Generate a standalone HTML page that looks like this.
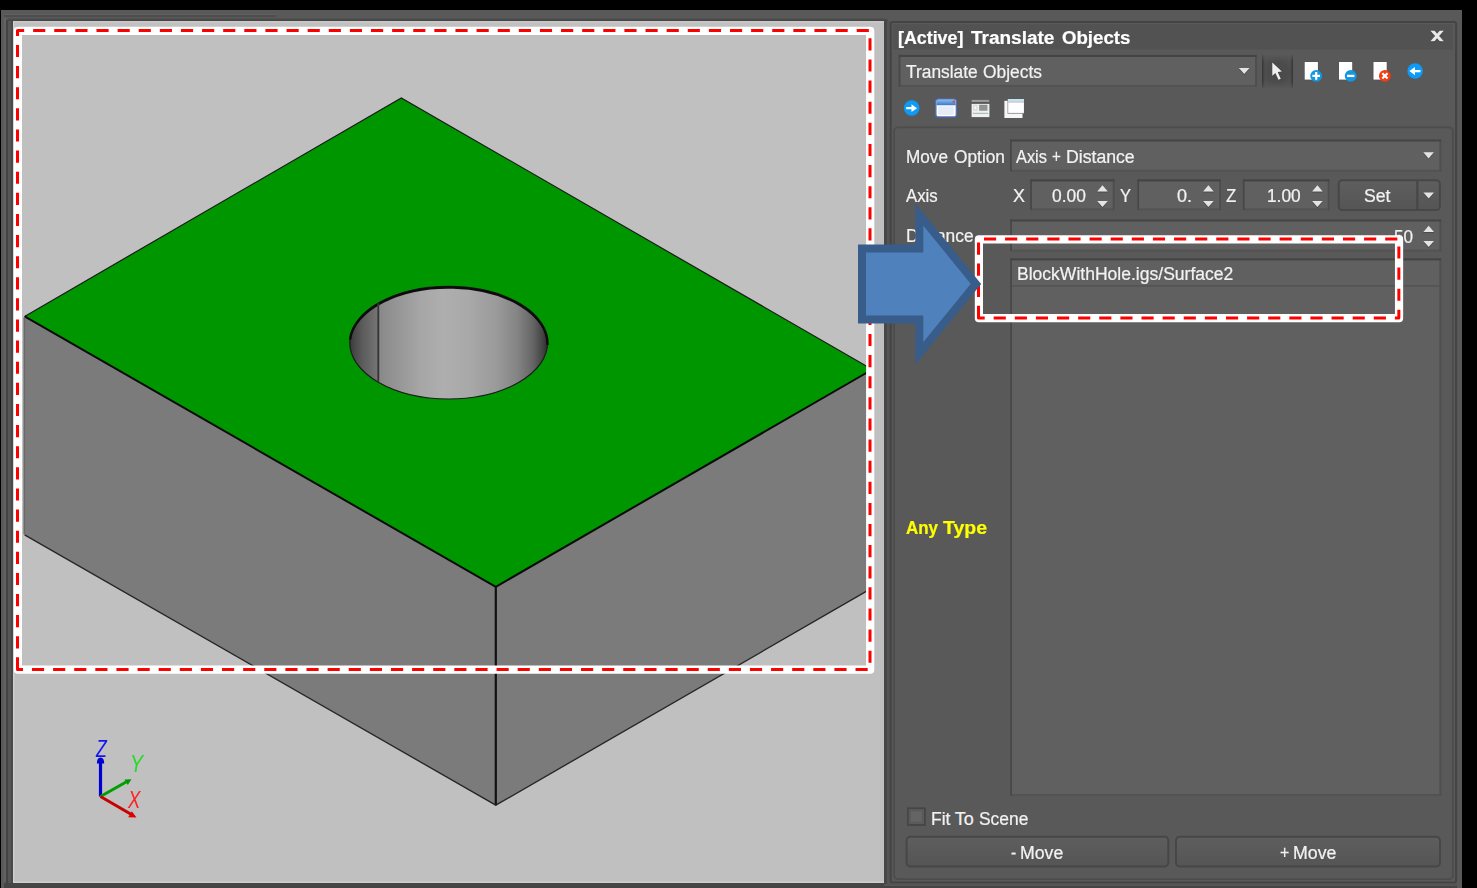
<!DOCTYPE html>
<html><head><meta charset="utf-8"><title>Translate Objects</title>
<style>
html,body{margin:0;padding:0;background:#000;}
body{width:1477px;height:888px;position:relative;overflow:hidden;font-family:"Liberation Sans",sans-serif;}
.b{position:absolute;box-sizing:border-box;}
.t{position:absolute;white-space:pre;line-height:1em;transform-origin:0 0;-webkit-text-stroke:0.22px currentColor;}
svg{position:absolute;left:0;top:0;overflow:visible;}
</style></head><body>

<div class="b" style="left:1px;top:10px;width:1461px;height:878px;background:#595959;"></div>
<div class="b" style="left:1px;top:10px;width:3px;height:878px;background:#5a5a5a;"></div>
<div class="b" style="left:4px;top:17px;width:1.6px;height:865px;background:#626262;"></div>
<div class="b" style="left:5.8px;top:20px;width:2.2px;height:864px;background:#434343;"></div>
<div class="b" style="left:8px;top:18px;width:2.6px;height:870px;background:#555555;"></div>
<div class="b" style="left:10.6px;top:18px;width:2.4px;height:870px;background:#494949;"></div>
<div class="b" style="left:4px;top:15.2px;width:272px;height:1.6px;background:#4d4d4d;"></div>
<div class="b" style="left:4px;top:13.8px;width:272px;height:1.4px;background:#5f5f5f;"></div>
<div class="b" style="left:8px;top:17.6px;width:880px;height:3.4px;background:linear-gradient(#565656,#474747 70%,#454545);border-top-right-radius:3px;"></div>
<div class="b" style="left:4px;top:883px;width:887px;height:5px;background:#464646;"></div>
<div class="b" style="left:884.4px;top:19.5px;width:2.6px;height:866.5px;background:#474747;"></div>
<div class="b" style="left:887px;top:21px;width:2.8px;height:865px;background:#545454;"></div>
<div class="b" style="left:13px;top:20.5px;width:871.4px;height:862.7px;background:#c0c0c0;box-shadow:inset 1.4px -1.4px 0 0 #cecece, inset 0 1.5px 0 0 #c9c9c9;"></div>
<svg width="1477" height="888" viewBox="0 0 1477 888">
<defs>
<clipPath id="vp"><rect x="13" y="20.5" width="871.4" height="862.7"/></clipPath>
<linearGradient id="hole" gradientUnits="userSpaceOnUse" x1="348.7" y1="0" x2="548.6" y2="0">
<stop offset="0" stop-color="#343434"/>
<stop offset="0.025" stop-color="#464646"/>
<stop offset="0.07" stop-color="#5c5c5c"/>
<stop offset="0.148" stop-color="#767676"/>
<stop offset="0.149" stop-color="#888888"/>
<stop offset="0.26" stop-color="#989898"/>
<stop offset="0.36" stop-color="#a6a6a6"/>
<stop offset="0.47" stop-color="#aeaeae"/>
<stop offset="0.60" stop-color="#a9a9a9"/>
<stop offset="0.74" stop-color="#9a9a9a"/>
<stop offset="0.84" stop-color="#858585"/>
<stop offset="0.92" stop-color="#666666"/>
<stop offset="0.97" stop-color="#444444"/>
<stop offset="1" stop-color="#262626"/>
</linearGradient>
</defs>
<g clip-path="url(#vp)">
<polygon points="24.6,316.4 495.8,586.8 495.8,805.2 24.6,534.8" fill="#7b7b7b"/>
<polygon points="495.8,586.8 872.3,369.5 872.3,587.9 495.8,805.2" fill="#7b7b7b"/>
<polygon points="401.3,97.9 872.3,369.5 495.8,586.8 24.6,316.4" fill="#009600"/>
<polyline points="24.6,316.4 401.3,97.9 872.3,369.5" fill="none" stroke="#1a1a1a" stroke-width="1.2"/>
<polyline points="24.6,316.4 495.8,586.8 872.3,369.5" fill="none" stroke="#0a0a0a" stroke-width="2"/>
<line x1="495.8" y1="586.8" x2="495.8" y2="805.1999999999999" stroke="#111" stroke-width="2.2"/>
<polyline points="24.6,534.8 495.8,805.2 872.3,587.9" fill="none" stroke="#262626" stroke-width="1.35"/>
<line x1="24.3" y1="317.4" x2="24.3" y2="534.3" stroke="#6a6a6a" stroke-width="1.7"/>
<ellipse cx="448.65" cy="342.7" rx="98.9" ry="56.3" fill="url(#hole)" stroke="#1c1c1c" stroke-width="1.2"/>
<path d="M350.0,339.6 A98.9,56.3 0 0 1 547.5,344.9" fill="none" stroke="#0c0c0c" stroke-width="2.5"/>
<line x1="378.3" y1="303.2" x2="378.3" y2="382.2" stroke="#363636" stroke-width="1.9"/>
<line x1="100.5" y1="796.5" x2="100.5" y2="761" stroke="#0000d2" stroke-width="3.2"/>
<path d="M96.9,763.5 Q96.9,757.5 100.5,757.5 Q104.2,757.5 104.2,763.5 Z" fill="#0000d2"/>
<line x1="100.5" y1="796.5" x2="127" y2="781.5" stroke="#00a000" stroke-width="3"/>
<polygon points="131.5,779.2 124.5,779.6 127.8,785" fill="#009800"/>
<line x1="100.5" y1="796.5" x2="131" y2="814.3" stroke="#c80000" stroke-width="3"/>
<polygon points="136.5,817.5 128.2,817.3 131.8,811.2" fill="#e00000"/>
</g>
</svg>
<div class="b" style="left:889.8px;top:21px;width:567.2px;height:862.5px;background:#595959;"></div>
<div class="b" style="left:884.4px;top:883.5px;width:572.6px;height:2.3px;background:#555555;"></div>
<div class="b" style="left:4px;top:885.8px;width:1453px;height:2.2px;background:#444444;"></div>
<svg width="1477" height="888"><rect x="893.2" y="24.3" width="559.7" height="25.2" fill="#525252"/></svg>
<div class="b" style="left:1262.2px;top:54.8px;width:31.0px;height:32.8px;background:linear-gradient(90deg,rgba(50,50,50,.95) 0,rgba(50,50,50,.4) 1.6px,rgba(50,50,50,0) 3px) ,linear-gradient(270deg,rgba(50,50,50,.95) 0,rgba(50,50,50,.4) 1.6px,rgba(50,50,50,0) 3px),radial-gradient(ellipse 62% 58% at 50% 52%,#494949 0,#4c4c4c 55%,#545454 100%);-webkit-mask-image:linear-gradient(180deg,rgba(0,0,0,.25) 0,#000 18%,#000 82%,rgba(0,0,0,.25) 100%);mask-image:linear-gradient(180deg,rgba(0,0,0,.25) 0,#000 18%,#000 82%,rgba(0,0,0,.25) 100%);"></div>
<svg width="1477" height="888" viewBox="0 0 1477 888">
<defs>
<linearGradient id="btn" x1="0" y1="0" x2="0" y2="1"><stop offset="0" stop-color="#5e5e5e"/><stop offset="1" stop-color="#555555"/></linearGradient>
</defs>
<rect x="890.75" y="22.05" width="565.3" height="860.5" rx="1.6" fill="none" stroke="#444444" stroke-width="1.95"/>
<rect x="894.1" y="127.4" width="558.8" height="751.8" rx="4" fill="none" stroke="#4c4c4c" stroke-width="1.8"/>
<rect x="898.6" y="54.9" width="358.4" height="32.1" fill="#606060" /><rect x="898.6" y="84.9" width="358.4" height="2.1" fill="#535353" /><rect x="1255.1" y="54.9" width="1.9" height="31.5" fill="#4e4e4e" /><rect x="898.6" y="54.9" width="1.8" height="31.5" fill="#484848" /><rect x="898.9" y="54.9" width="357.8" height="2.1" fill="#444444" />
<rect x="1010" y="139.4" width="431.3" height="32.4" fill="#606060" /><rect x="1010" y="169.70000000000002" width="431.3" height="2.1" fill="#535353" /><rect x="1439.3999999999999" y="139.4" width="1.9" height="31.8" fill="#4e4e4e" /><rect x="1010" y="139.4" width="1.8" height="31.8" fill="#484848" /><rect x="1010.3" y="139.4" width="430.7" height="2.1" fill="#444444" />
<rect x="1030.1" y="179.3" width="84.6" height="31.2" fill="#606060" /><rect x="1030.1" y="208.4" width="84.6" height="2.1" fill="#535353" /><rect x="1112.8" y="179.3" width="1.9" height="30.6" fill="#4e4e4e" /><rect x="1030.1" y="179.3" width="1.8" height="30.6" fill="#484848" /><rect x="1030.3999999999999" y="179.3" width="84.0" height="2.1" fill="#444444" />
<rect x="1137.3" y="179.3" width="83.7" height="31.2" fill="#606060" /><rect x="1137.3" y="208.4" width="83.7" height="2.1" fill="#535353" /><rect x="1219.1" y="179.3" width="1.9" height="30.6" fill="#4e4e4e" /><rect x="1137.3" y="179.3" width="1.8" height="30.6" fill="#484848" /><rect x="1137.6" y="179.3" width="83.1" height="2.1" fill="#444444" />
<rect x="1242.8" y="179.3" width="86.8" height="31.2" fill="#606060" /><rect x="1242.8" y="208.4" width="86.8" height="2.1" fill="#535353" /><rect x="1327.6999999999998" y="179.3" width="1.9" height="30.6" fill="#4e4e4e" /><rect x="1242.8" y="179.3" width="1.8" height="30.6" fill="#484848" /><rect x="1243.1" y="179.3" width="86.2" height="2.1" fill="#444444" />
<rect x="1010.2" y="219.4" width="431.1" height="32.3" fill="#606060" /><rect x="1010.2" y="249.6" width="431.1" height="2.1" fill="#535353" /><rect x="1439.3999999999999" y="219.4" width="1.9" height="31.7" fill="#4e4e4e" /><rect x="1010.2" y="219.4" width="1.8" height="31.7" fill="#484848" /><rect x="1010.5" y="219.4" width="430.5" height="2.1" fill="#444444" />
<rect x="1010.2" y="258.3" width="431.1" height="537.9" fill="#606060" /><rect x="1010.2" y="794.1" width="431.1" height="2.1" fill="#535353" /><rect x="1439.3999999999999" y="258.3" width="1.9" height="537.3" fill="#4e4e4e" /><rect x="1010.2" y="258.3" width="1.8" height="537.3" fill="#484848" /><rect x="1010.5" y="258.3" width="430.5" height="2.1" fill="#444444" />
<rect x="1012" y="285.2" width="427.4" height="1.5" fill="#535353" />
<rect x="1338.7" y="180.3" width="101.2" height="29.7" rx="3.6" fill="url(#btn)" stroke="#474747" stroke-width="2"/>
<rect x="1416.2" y="180.5" width="2.2" height="29.3" fill="#474747" />
<rect x="906.6" y="836.8" width="261.7" height="29.6" rx="3.6" fill="url(#btn)" stroke="#474747" stroke-width="2"/>
<rect x="1176" y="836.8" width="264" height="29.6" rx="3.6" fill="url(#btn)" stroke="#474747" stroke-width="2"/>
<rect x="907" y="807.4" width="18.7" height="18.4" fill="#454545" />
<rect x="908.7" y="809.1" width="15.3" height="15.0" fill="#5a5a5a" />
<rect x="911" y="811.4" width="10.7" height="10.4" fill="#646464" />
</svg>
<div class="t" style="left:96.07px;top:738px;font-size:23px;color:#1414f0;font-style:italic;-webkit-text-stroke:0;transform:scaleX(0.7687);">Z</div>
<div class="t" style="left:129.69px;top:753px;font-size:23px;color:#22dd22;font-style:italic;-webkit-text-stroke:0;transform:scaleX(0.8533);">Y</div>
<div class="t" style="left:127.71px;top:789px;font-size:23px;color:#ff2222;font-style:italic;-webkit-text-stroke:0;transform:scaleX(0.8056);">X</div>
<div class="t" style="left:898.45px;top:29px;font-size:18.8px;color:#ffffff;font-weight:700;transform:scaleX(0.9493);">[Active]</div>
<div class="t" style="left:971.20px;top:29px;font-size:18.8px;color:#ffffff;font-weight:700;transform:scaleX(1.0107);">Translate</div>
<div class="t" style="left:1061.70px;top:29px;font-size:18.8px;color:#ffffff;font-weight:700;transform:scaleX(0.9921);">Objects</div>
<div class="t" style="left:905.90px;top:63px;font-size:18.0px;color:#f2f2f2;transform:scaleX(0.9643);">Translate</div>
<div class="t" style="left:983.00px;top:63px;font-size:18.0px;color:#f2f2f2;transform:scaleX(0.9652);">Objects</div>
<div class="t" style="left:905.55px;top:148px;font-size:18.0px;color:#f2f2f2;transform:scaleX(0.9534);">Move</div>
<div class="t" style="left:954.20px;top:148px;font-size:18.0px;color:#f2f2f2;transform:scaleX(0.9611);">Option</div>
<div class="t" style="left:1015.60px;top:148px;font-size:18.0px;color:#f2f2f2;transform:scaleX(0.9087);">Axis</div>
<div class="t" style="left:1051.60px;top:148px;font-size:18.0px;color:#f2f2f2;transform:scaleX(0.8400);">+</div>
<div class="t" style="left:1065.82px;top:148px;font-size:18.0px;color:#f2f2f2;transform:scaleX(0.9809);">Distance</div>
<div class="t" style="left:905.60px;top:187px;font-size:18.0px;color:#f2f2f2;transform:scaleX(0.9322);">Axis</div>
<div class="t" style="left:1013.10px;top:187px;font-size:18.0px;color:#f2f2f2;transform:scaleX(0.9917);">X</div>
<div class="t" style="left:1052.40px;top:187px;font-size:18.0px;color:#f2f2f2;transform:scaleX(0.9651);">0.00</div>
<div class="t" style="left:1120.10px;top:187px;font-size:18.0px;color:#f2f2f2;transform:scaleX(0.9167);">Y</div>
<div class="t" style="left:1177.40px;top:187px;font-size:18.0px;color:#f2f2f2;transform:scaleX(0.9992);">0.</div>
<div class="t" style="left:1226.30px;top:187px;font-size:18.0px;color:#f2f2f2;transform:scaleX(0.9364);">Z</div>
<div class="t" style="left:1267.24px;top:187px;font-size:18.0px;color:#f2f2f2;transform:scaleX(0.9611);">1.00</div>
<div class="t" style="left:1363.80px;top:187px;font-size:18.0px;color:#f2f2f2;transform:scaleX(0.9809);">Set</div>
<div class="t" style="left:905.74px;top:227px;font-size:18.0px;color:#f2f2f2;transform:scaleX(0.9649);">Distance</div>
<div class="t" style="left:1393.80px;top:228px;font-size:18.0px;color:#f2f2f2;transform:scaleX(0.9495);">50</div>
<div class="t" style="left:1016.93px;top:265px;font-size:18.0px;color:#f2f2f2;transform:scaleX(0.9739);">BlockWithHole.igs/Surface2</div>
<div class="t" style="left:906.00px;top:519px;font-size:18.8px;color:#ffff00;font-weight:700;transform:scaleX(0.9019);">Any</div>
<div class="t" style="left:943.30px;top:519px;font-size:18.8px;color:#ffff00;font-weight:700;transform:scaleX(1.0358);">Type</div>
<div class="t" style="left:931.33px;top:810px;font-size:18.0px;color:#f2f2f2;transform:scaleX(0.9740);">Fit</div>
<div class="t" style="left:954.80px;top:810px;font-size:18.0px;color:#f2f2f2;transform:scaleX(1.0000);">To</div>
<div class="t" style="left:979.20px;top:810px;font-size:18.0px;color:#f2f2f2;transform:scaleX(0.9681);">Scene</div>
<div class="t" style="left:1010.60px;top:844px;font-size:18.0px;color:#f2f2f2;transform:scaleX(0.8667);">-</div>
<div class="t" style="left:1019.92px;top:844px;font-size:18.0px;color:#f2f2f2;transform:scaleX(0.9836);">Move</div>
<div class="t" style="left:1279.80px;top:844px;font-size:18.0px;color:#f2f2f2;transform:scaleX(0.8800);">+</div>
<div class="t" style="left:1293.11px;top:844px;font-size:18.0px;color:#f2f2f2;transform:scaleX(0.9859);">Move</div>
<svg width="1477" height="888" viewBox="0 0 1477 888">
<polygon points="1430.4,31.7 1434.5,31.7 1443.8,42.2 1439.7,42.2" fill="#3e3e3e"/>
<polygon points="1439.7,31.7 1443.8,31.7 1434.5,42.2 1430.4,42.2" fill="#3e3e3e"/>
<polygon points="1430.4,30.7 1434.5,30.7 1443.8,41.2 1439.7,41.2" fill="#e9e9e9"/>
<polygon points="1439.7,30.7 1443.8,30.7 1434.5,41.2 1430.4,41.2" fill="#e9e9e9"/>
<polygon points="1238.9,68.9 1249.5,68.9 1244.2,75.19999999999999" fill="#4a4a4a"/><polygon points="1238.9,67.9 1249.5,67.9 1244.2,74.1" fill="#e4e4e4"/>
<polygon points="1423.3,153.20000000000002 1433.8999999999999,153.20000000000002 1428.6,159.5" fill="#4a4a4a"/><polygon points="1423.3,152.20000000000002 1433.8999999999999,152.20000000000002 1428.6,158.4" fill="#e4e4e4"/>
<polygon points="1423.4,193.4 1434.0,193.4 1428.7,199.7" fill="#4a4a4a"/><polygon points="1423.4,192.4 1434.0,192.4 1428.7,198.6" fill="#e4e4e4"/>
<rect x="1097.2" y="191.4" width="10.6" height="1.2" fill="#4c4c4c"/><polygon points="1097.2,191.4 1107.8,191.4 1102.5,185.20000000000002" fill="#e4e4e4"/>
<polygon points="1097.2,201.9 1107.8,201.9 1102.5,208.2" fill="#4a4a4a"/><polygon points="1097.2,200.9 1107.8,200.9 1102.5,207.1" fill="#e4e4e4"/>
<rect x="1203.1000000000001" y="191.4" width="10.6" height="1.2" fill="#4c4c4c"/><polygon points="1203.1000000000001,191.4 1213.7,191.4 1208.4,185.20000000000002" fill="#e4e4e4"/>
<polygon points="1203.1000000000001,201.9 1213.7,201.9 1208.4,208.2" fill="#4a4a4a"/><polygon points="1203.1000000000001,200.9 1213.7,200.9 1208.4,207.1" fill="#e4e4e4"/>
<rect x="1312.1000000000001" y="191.4" width="10.6" height="1.2" fill="#4c4c4c"/><polygon points="1312.1000000000001,191.4 1322.7,191.4 1317.4,185.20000000000002" fill="#e4e4e4"/>
<polygon points="1312.1000000000001,201.9 1322.7,201.9 1317.4,208.2" fill="#4a4a4a"/><polygon points="1312.1000000000001,200.9 1322.7,200.9 1317.4,207.1" fill="#e4e4e4"/>
<rect x="1423.4" y="231.9" width="10.6" height="1.2" fill="#4c4c4c"/><polygon points="1423.4,231.9 1434.0,231.9 1428.7,225.70000000000002" fill="#e4e4e4"/>
<polygon points="1423.4,241.9 1434.0,241.9 1428.7,248.2" fill="#4a4a4a"/><polygon points="1423.4,240.9 1434.0,240.9 1428.7,247.1" fill="#e4e4e4"/>
<path d="M1272.3,62.4 L1272.3,75.8 L1275.4,72.9 L1278.5,79.8 L1280.7,78.8 L1277.7,72.1 L1281.8,71.4 Z" fill="#f0f0f0"/>
<rect x="1304.1000000000001" y="61.4" width="14.4" height="18.8" fill="#4f4f4f" opacity="0.5"/><rect x="1304.7" y="62" width="13.2" height="17.6" fill="#ffffff"/><circle cx="1316.2" cy="75.9" r="5.95" fill="#1496e2"/><path d="M1312.4,75.9 H1320.0 M1316.2,72.10000000000001 V79.7" stroke="#fff" stroke-width="2.2"/>
<rect x="1338.4" y="61.4" width="14.4" height="18.8" fill="#4f4f4f" opacity="0.5"/><rect x="1339" y="62" width="13.2" height="17.6" fill="#ffffff"/><circle cx="1350.7" cy="75.9" r="5.95" fill="#1496e0"/><path d="M1347.0,75.9 H1354.4" stroke="#fff" stroke-width="2.3"/>
<rect x="1372.9" y="61.4" width="14.4" height="18.8" fill="#4f4f4f" opacity="0.5"/><rect x="1373.5" y="62" width="13.2" height="17.6" fill="#ffffff"/><circle cx="1384.9" cy="75.9" r="5.95" fill="#f53c10"/><path d="M1382.3000000000002,73.2 L1387.5,78.60000000000001 M1387.5,73.2 L1382.3000000000002,78.60000000000001" stroke="#fff" stroke-width="2.2"/>
<circle cx="1415.1" cy="71" r="7.75" fill="#0c9cf8"/>
<path d="M1409.3,71.1 L1415,67 L1415,69.95 L1420.5,69.95 L1420.5,72.25 L1415,72.25 L1415,75.2 Z" fill="#fff"/>
<circle cx="911.7" cy="108" r="7.75" fill="#0c9cf8"/>
<path d="M917,108.2 L911.5,104.3 L911.5,107.05 L906.2,107.05 L906.2,109.35 L911.5,109.35 L911.5,112.1 Z" fill="#fff"/>
<defs><linearGradient id="wt" x1="0" y1="0" x2="0" y2="1"><stop offset="0" stop-color="#86bcf0"/><stop offset="1" stop-color="#3a78c8"/></linearGradient></defs>
<rect x="935.9" y="99.1" width="20.4" height="17.8" rx="2.2" fill="#ffffff" stroke="#4f70c0" stroke-width="1.3"/>
<path d="M936.5,105.2 V101.2 Q936.5,99.7 938,99.7 H954.2 Q955.7,99.7 955.7,101.2 V105.2 Z" fill="url(#wt)"/>
<rect x="938.2" y="106.3" width="15.6" height="8.6" fill="#e6ecf7"/>
<rect x="952.6" y="100.5" width="2.4" height="2.3" rx="0.6" fill="#e24a4a"/>
<rect x="971.6" y="99.9" width="17.6" height="2" fill="#9c9c9c"/>
<rect x="971.6" y="103.9" width="17.8" height="13.2" fill="#eef1f1"/>
<rect x="979.2" y="104.8" width="8.2" height="5.9" fill="#8a8a8a"/>
<rect x="979.2" y="106.5" width="8.2" height="0.7" fill="#a4a4a4"/><rect x="979.2" y="108.6" width="8.2" height="0.7" fill="#a4a4a4"/>
<rect x="973.2" y="104.8" width="4.2" height="5.9" fill="#d4d9d9"/><rect x="974.3" y="106.2" width="2" height="3" fill="#f6f8f8"/>
<rect x="972.8" y="112.8" width="15.4" height="1.1" fill="#a9b7b7"/>
<rect x="1004.4" y="100.8" width="18.1" height="17.2" fill="#f7f7f7"/>
<rect x="1007.5" y="99" width="16.4" height="14.8" fill="#8e8e8e"/>
<rect x="1008.2" y="99" width="15.7" height="13.9" fill="#ffffff"/>
<rect x="1008.2" y="99" width="15.7" height="2.5" fill="#c2e2f2"/>
<rect x="1008.2" y="101.5" width="15.7" height="1" fill="#a9b3b7"/>
<path d="M17.9,669.7 V30.9 H870.2 V669.7 Z" fill="none" stroke="#fff" stroke-width="8.2" stroke-linejoin="round"/><path d="M17.5,669.5 V30.5 H870 V669.5 Z" fill="none" stroke="#ff0000" stroke-width="3" stroke-dasharray="12.15 8.967" stroke-linejoin="round"/>
<path d="M978.9,318.2 V239.4 H1399.05 V318.2 Z" fill="none" stroke="#fff" stroke-width="8.2" stroke-linejoin="round"/><path d="M978.5,318 V239 H1398.85 V318 Z" fill="none" stroke="#ff0000" stroke-width="3" stroke-dasharray="12.15 8.967" stroke-linejoin="round"/>
<path d="M862,248.4 H919.3 V214.5 L976,283.9 L919.3,353.3 V319.4 H862 Z" fill="#4f81bd" stroke="#385d8a" stroke-width="8" stroke-linejoin="miter" stroke-miterlimit="10"/>
</svg>
</body></html>
